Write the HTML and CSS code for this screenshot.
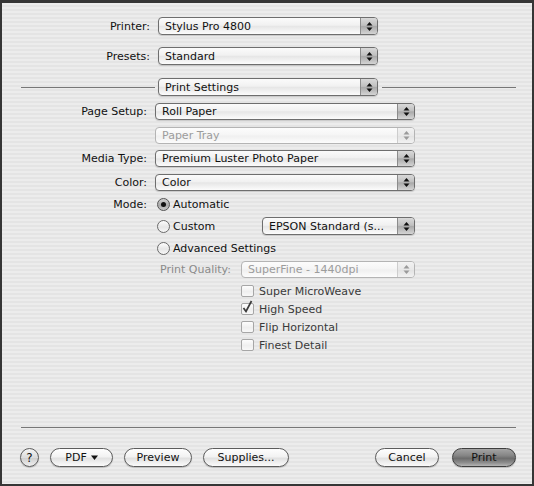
FILE: index.html
```html
<!DOCTYPE html>
<html>
<head>
<meta charset="utf-8">
<link rel="stylesheet" href="styles.css">
</head>
<body>
<div class="window">
  <div class="top-form">
    <span class="lbl">Printer:</span>
    <div class="popup tall"><span class="val">Stylus Pro 4800</span><span class="arr"><svg width="7" height="11" viewBox="0 0 7 11"><polygon points="0.5,4.5 3.5,1 6.5,4.5"/><polygon points="0.5,6.5 3.5,10 6.5,6.5"/></svg></span></div>
    <span class="lbl">Presets:</span>
    <div class="popup tall"><span class="val">Standard</span><span class="arr"><svg width="7" height="11" viewBox="0 0 7 11"><polygon points="0.5,4.5 3.5,1 6.5,4.5"/><polygon points="0.5,6.5 3.5,10 6.5,6.5"/></svg></span></div>
  </div>

  <div class="pane-sep">
    <span class="rule rule-l"></span>
    <div class="popup tall pane-popup"><span class="val">Print Settings</span><span class="arr"><svg width="7" height="11" viewBox="0 0 7 11"><polygon points="0.5,4.5 3.5,1 6.5,4.5"/><polygon points="0.5,6.5 3.5,10 6.5,6.5"/></svg></span></div>
    <span class="rule rule-r"></span>
  </div>

  <div class="settings">
    <div class="srow prow"><span class="lbl">Page Setup:</span>
      <div class="popup wide"><span class="val">Roll Paper</span><span class="arr"><svg width="7" height="11" viewBox="0 0 7 11"><polygon points="0.5,4.5 3.5,1 6.5,4.5"/><polygon points="0.5,6.5 3.5,10 6.5,6.5"/></svg></span></div></div>
    <div class="srow prow gap7"><span class="lbl"></span>
      <div class="popup wide disabled"><span class="val">Paper Tray</span><span class="arr"><svg width="7" height="11" viewBox="0 0 7 11"><polygon points="0.5,4.5 3.5,1 6.5,4.5"/><polygon points="0.5,6.5 3.5,10 6.5,6.5"/></svg></span></div></div>
    <div class="srow prow gap6"><span class="lbl">Media Type:</span>
      <div class="popup wide"><span class="val">Premium Luster Photo Paper</span><span class="arr"><svg width="7" height="11" viewBox="0 0 7 11"><polygon points="0.5,4.5 3.5,1 6.5,4.5"/><polygon points="0.5,6.5 3.5,10 6.5,6.5"/></svg></span></div></div>
    <div class="srow prow gap7"><span class="lbl">Color:</span>
      <div class="popup wide"><span class="val">Color</span><span class="arr"><svg width="7" height="11" viewBox="0 0 7 11"><polygon points="0.5,4.5 3.5,1 6.5,4.5"/><polygon points="0.5,6.5 3.5,10 6.5,6.5"/></svg></span></div></div>

    <div class="srow rrow first"><span class="lbl">Mode:</span>
      <div class="radio-line"><span class="radio on"></span><span>Automatic</span></div></div>
    <div class="srow rrow"><span class="lbl"></span>
      <div class="radio-line wide"><span class="radio"></span><span>Custom</span>
        <div class="popup epson"><span class="val">EPSON Standard (s...</span><span class="arr"><svg width="7" height="11" viewBox="0 0 7 11"><polygon points="0.5,4.5 3.5,1 6.5,4.5"/><polygon points="0.5,6.5 3.5,10 6.5,6.5"/></svg></span></div>
      </div></div>
    <div class="srow rrow"><span class="lbl"></span>
      <div class="radio-line"><span class="radio"></span><span>Advanced Settings</span></div></div>

    <div class="srow pq"><span class="lbl"></span>
      <div class="pq-inner"><span class="pq-lbl">Print Quality:</span>
        <div class="popup disabled pq-popup"><span class="val">SuperFine - 1440dpi</span><span class="arr"><svg width="7" height="11" viewBox="0 0 7 11"><polygon points="0.5,4.5 3.5,1 6.5,4.5"/><polygon points="0.5,6.5 3.5,10 6.5,6.5"/></svg></span></div>
      </div></div>

    <div class="checks">
      <div class="crow"><span class="cbox"></span><span>Super MicroWeave</span></div>
      <div class="crow"><span class="cbox"><svg class="tick" width="13" height="14" viewBox="0 0 13 14"><path d="M2.5 8 L5 11.5 L10.5 1"/></svg></span><span>High Speed</span></div>
      <div class="crow"><span class="cbox"></span><span>Flip Horizontal</span></div>
      <div class="crow"><span class="cbox"></span><span>Finest Detail</span></div>
    </div>
  </div>

  <div class="footer">
    <div class="frule"></div>
    <div class="btnrow">
      <span class="btn help">?</span>
      <span class="btn b-pdf">PDF <svg width="7" height="5" viewBox="0 0 7 5"><polygon points="0,0.5 7,0.5 3.5,5"/></svg></span>
      <span class="btn b-preview">Preview</span>
      <span class="btn b-supplies">Supplies...</span>
      <span class="spacer"></span>
      <span class="btn b-cancel">Cancel</span>
      <span class="btn default b-print">Print</span>
    </div>
  </div>
</div>
</body>
</html>
```

FILE: styles.css
```css
* { box-sizing: border-box; }

body {
  margin: 0;
  font-family: "DejaVu Sans", "Noto Sans", sans-serif;
  font-size: 11px;
  color: #111;
}

.window {
  width: 534px;
  height: 486px;
  border: 2px solid #363636;
  border-top-width: 3px;
  background: repeating-linear-gradient(to bottom, #ececec 0, #ececec 2px, #e4e4e4 2px, #e4e4e4 4px);
  display: flex;
  flex-direction: column;
}

.lbl {
  text-align: right;
  white-space: nowrap;
}

/* popup menus */
.popup {
  height: 17px;
  display: flex;
  align-items: stretch;
  border: 1px solid #6e6e6e;
  border-radius: 4px;
  background: linear-gradient(to bottom, #fbfbfb 0%, #f1f1f1 45%, #e6e6e6 52%, #fcfcfc 100%);
  overflow: hidden;
  box-shadow: 0 1px 1px rgba(0,0,0,0.15);
}
.popup.tall { height: 18px; }
.popup .val {
  flex: 1;
  display: flex;
  align-items: center;
  padding-left: 6px;
  white-space: nowrap;
  overflow: hidden;
}
.popup .arr {
  width: 17px;
  border-left: 1px solid #8c8c8c;
  background: linear-gradient(to bottom, #d9d9d9 0%, #c0c0c0 46%, #a9a9a9 52%, #d4d4d4 100%);
  display: flex;
  align-items: center;
  justify-content: center;
}
.popup .arr svg { fill: #111; }
.popup.disabled {
  border-color: #b4b4b4;
  color: #9c9c9c;
  background: linear-gradient(to bottom, #fcfcfc 0%, #f5f5f5 48%, #efefef 52%, #fcfcfc 100%);
  box-shadow: none;
}
.popup.disabled .arr {
  border-left-color: #cdcdcd;
  background: linear-gradient(to bottom, #f2f2f2 0%, #e8e8e8 50%, #e2e2e2 52%, #f2f2f2 100%);
}
.popup.disabled .arr svg { fill: #9a9a9a; }

/* top form */
.top-form {
  display: grid;
  grid-template-columns: 148px 220px;
  grid-auto-rows: 18px;
  column-gap: 8px;
  row-gap: 12px;
  align-items: center;
  margin-top: 14px;
}

/* pane separator */
.pane-sep {
  display: flex;
  align-items: center;
  margin-top: 13px;
  padding-left: 19px;
}
.rule {
  width: 134px;
  height: 1px;
  background: #777;
}
.rule-l { margin-right: 3px; }
.rule-r { margin-left: 4px; }
.pane-popup { width: 220px; }

/* settings */
.settings {
  display: flex;
  flex-direction: column;
  margin-top: 7px;
}
.srow {
  display: flex;
  align-items: center;
}
.srow > .lbl {
  width: 145px;
  margin-right: 8px;
  flex: none;
}
.prow { height: 17px; }
.gap6 { margin-top: 6px; }
.gap7 { margin-top: 7px; }
.popup.wide { width: 260px; }

.rrow { height: 22px; }
.rrow.first { margin-top: 2px; }
.radio-line {
  display: flex;
  align-items: center;
  padding-left: 2px;
}
.radio-line.wide { width: 260px; }
.radio {
  width: 13px;
  height: 13px;
  border-radius: 50%;
  border: 1px solid #6a6a6a;
  background: linear-gradient(to bottom, #fdfdfd, #e6e6e6 55%, #f8f8f8);
  margin-right: 3px;
  display: flex;
  align-items: center;
  justify-content: center;
  flex: none;
}
.radio.on {
  background: linear-gradient(to bottom, #d2d2d2, #a9a9a9 55%, #c9c9c9);
  border-color: #555;
}
.radio.on::after {
  content: "";
  width: 5px;
  height: 5px;
  border-radius: 50%;
  background: #111;
}
.popup.epson {
  width: 153px;
  height: 18px;
  margin-left: auto;
}

.pq { margin-top: 2px; height: 17px; }
.pq-inner {
  display: flex;
  align-items: center;
  padding-left: 5px;
  height: 17px;
}
.pq-lbl {
  color: #8a8a8a;
  width: 81px;
  white-space: nowrap;
}
.pq-popup { width: 174px; }

.checks {
  margin-top: 4px;
  padding-left: 241px;
  display: flex;
  flex-direction: column;
  margin-left: -2px;
}
.crow {
  height: 18px;
  display: flex;
  align-items: center;
  color: #3a3a3a;
}
.cbox {
  width: 13px;
  height: 12px;
  border: 1px solid #a6a6a6;
  border-radius: 2px;
  background: linear-gradient(to bottom, #fdfdfd, #efefef 55%, #f8f8f8);
  margin-right: 5px;
  position: relative;
  flex: none;
}
.tick {
  position: absolute;
  left: -1px;
  top: -4px;
}
.tick path {
  fill: none;
  stroke: #3a3a3a;
  stroke-width: 1.7;
}

/* footer */
.footer {
  margin-top: auto;
  padding: 0 16px 17px 18px;
}
.frule {
  height: 1px;
  background: #777;
  margin-left: 1px;
}
.btnrow {
  display: flex;
  align-items: center;
  margin-top: 20px;
  height: 19px;
}
.btn {
  height: 19px;
  border: 1px solid #5c5c5c;
  border-radius: 10px;
  background: linear-gradient(to bottom, #fefefe 0%, #f2f2f2 45%, #e1e1e1 55%, #fbfbfb 100%);
  box-shadow: 0 1px 1px rgba(0,0,0,0.2);
  display: flex;
  align-items: center;
  justify-content: center;
  white-space: nowrap;
  flex: none;
  gap: 4px;
}
.btn svg { fill: #111; }
.help {
  width: 19px;
  font-size: 12px;
  background: linear-gradient(to bottom, #f4f4f4 0%, #dcdcdc 50%, #cfcfcf 55%, #f0f0f0 100%);
}
.b-pdf { width: 63px; margin-left: 11px; }
.b-preview { width: 68px; margin-left: 11px; }
.b-supplies { width: 86px; margin-left: 11px; }
.spacer { flex: 1; }
.b-cancel { width: 64px; }
.b-print { width: 64px; margin-left: 13px; }
.btn.default {
  border-color: #3e3e3e;
  background: linear-gradient(to bottom, #a4a4a4 0%, #848484 40%, #6c6c6c 55%, #8c8c8c 80%, #b4b4b4 100%);
}
```
